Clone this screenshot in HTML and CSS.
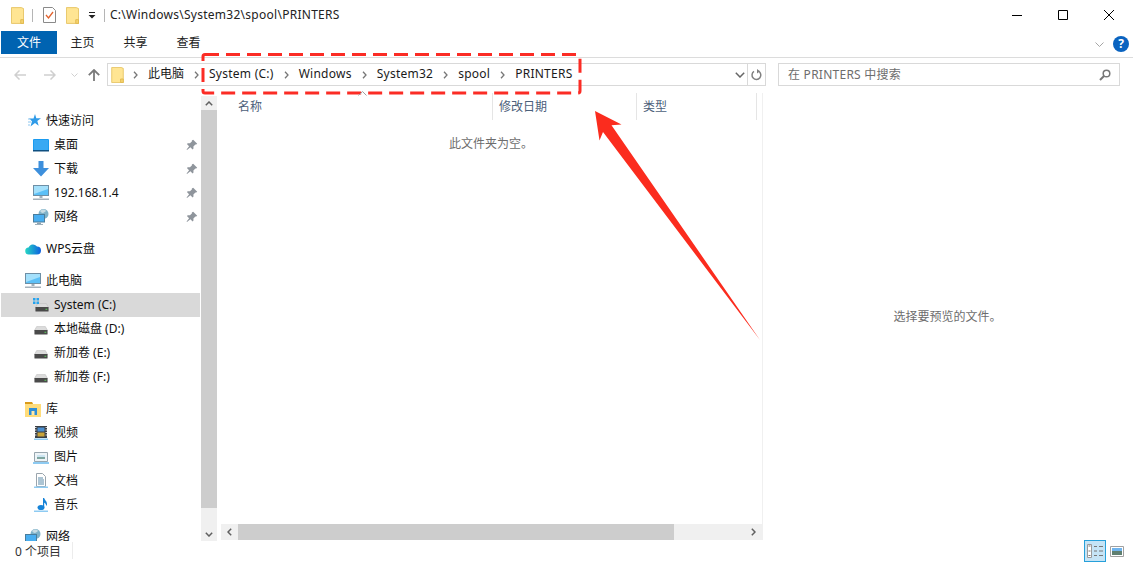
FILE: index.html
```html
<!DOCTYPE html>
<html lang="zh-CN">
<head>
<meta charset="utf-8">
<title>PRINTERS</title>
<link rel="stylesheet" href="styles.css">
</head>
<body>
<svg class="defs" width="0" height="0" aria-hidden="true">
  <symbol id="folder" viewBox="0 0 14 18">
    <path d="M.5.5h10.500l2.500 1v16H.5z" fill="#ffe593" stroke="#e6c463"/>
    <path d="M10.500 13.500h3v4h-3z" fill="#f6d36f" stroke="#e0b94f"/>
  </symbol>
  <symbol id="pin" viewBox="0 0 12 12">
    <path d="M7.200.8l4 4-1 .8-.8-.2-2 2 .1 2.200-.9.900-2.200-2.200L1 11l-.4-.4 2.500-3.300L.9 5.100l.9-.9 2.200.1 2-2-.2-.8z" fill="#8f959c"/>
  </symbol>
  <symbol id="disk" viewBox="0 0 16 10">
    <path d="M3 .5h10l2.500 4.500H.5z" fill="#dcdcdc" stroke="#bbb" stroke-width=".6"/>
    <rect x=".5" y="4.500" width="15" height="5" rx=".6" fill="#4a4a4a"/>
    <rect x="12" y="6.500" width="2" height="1" fill="#5fe05f"/>
  </symbol>
  <symbol id="monitor" viewBox="0 0 16 16">
    <rect x=".5" y=".5" width="15" height="10" fill="#5cc0f7" stroke="#6e8fa5"/>
    <path d="M1 1h14v3L1 9z" fill="#a4e0fb"/>
    <path d="M6.500 11h3v2h-3z" fill="#9fb0bb"/><path d="M0 13.500h16V15H0z" fill="#a5b1ba"/>
  </symbol>
  <symbol id="net" viewBox="0 0 16 16">
    <circle cx="10.500" cy="5" r="5" fill="#7fb2c9"/><path d="M7 2c2-2 5-2 6 0-2 2-4 3-6 0z" fill="#c8dce4"/>
    <rect x=".5" y="5.500" width="11" height="7.500" fill="#49aef0" stroke="#4a7d9c"/>
    <path d="M4 13.500h4V15H4z" fill="#8da2b0"/><path d="M2 15h8v1H2z" fill="#9fb0bb"/>
  </symbol>
</svg>

<div class="window">
  <header class="titlebar">
    <div class="qat">
      <svg class="i-folder" width="13" height="17"><use href="#folder"/></svg>
      <span class="qat-sep"></span>
      <svg class="i-check" width="13" height="16" viewBox="0 0 13 16"><path d="M.5.5h9l3 3v12H.5z" fill="#fff" stroke="#8a8a8a"/><path d="M3 8l2.500 3L10 5" fill="none" stroke="#e2622d" stroke-width="1.300"/></svg>
      <svg class="i-folder" width="13" height="17"><use href="#folder"/></svg>
      <svg class="i-drop" width="8" height="7" viewBox="0 0 8 7"><path d="M1 0h6v1H1zM.5 3h7L4 6.500z" fill="#222"/></svg>
      <span class="qat-sep"></span>
    </div>
    <div class="title">C:\Windows\System32\spool\PRINTERS</div>
    <div class="winctl">
      <svg width="10" height="10" viewBox="0 0 10 10"><path d="M0 5.500h10" stroke="#000"/></svg>
      <svg width="10" height="10" viewBox="0 0 10 10"><path d="M.5.500h9v9h-9z" fill="none" stroke="#000"/></svg>
      <svg width="10" height="10" viewBox="0 0 10 10"><path d="M0 0l10 10M10 0L0 10" stroke="#000"/></svg>
    </div>
  </header>

  <nav class="ribbon">
    <span class="tab tab-file">文件</span>
    <span class="tab">主页</span>
    <span class="tab">共享</span>
    <span class="tab">查看</span>
    <svg class="rib-chev" width="9" height="5" viewBox="0 0 9 5"><path d="M.5.500l4 4 4-4" fill="none" stroke="#a5a5a5"/></svg>
    <span class="help">?</span>
  </nav>

  <div class="addr-row">
    <div class="navbtns">
      <svg width="12" height="10" viewBox="0 0 12 10"><path d="M5.500.5L1 5l4.500 4.500M1 5h11" fill="none" stroke="#cfcfcf" stroke-width="1.500"/></svg>
      <svg width="12" height="10" viewBox="0 0 12 10"><path d="M6.500.5L11 5 6.500 9.500M11 5H0" fill="none" stroke="#cfcfcf" stroke-width="1.500"/></svg>
      <svg width="7" height="4" viewBox="0 0 7 4"><path d="M.5.500l3 3 3-3" fill="none" stroke="#d0d0d0"/></svg>
      <svg width="12" height="12" viewBox="0 0 12 12"><path d="M.8 6.200L6 1l5.200 5.200M6 1v11" fill="none" stroke="#7a7a7a" stroke-width="1.800"/></svg>
    </div>
    <div class="addr">
      <svg class="addr-folder" width="13" height="16"><use href="#folder"/></svg>
      <svg class="chev first" width="5" height="8" viewBox="0 0 5 8"><path d="M1 .8L4 4 1 7.200" fill="none" stroke="#777" stroke-width="1.300"/></svg>
      <div class="crumbs">
        <span>此电脑</span>
        <svg class="chev" width="5" height="8" viewBox="0 0 5 8"><path d="M1 .8L4 4 1 7.200" fill="none" stroke="#777" stroke-width="1.300"/></svg>
        <span class="lat">System (C:)</span>
        <svg class="chev" width="5" height="8" viewBox="0 0 5 8"><path d="M1 .8L4 4 1 7.200" fill="none" stroke="#777" stroke-width="1.300"/></svg>
        <span class="lat">Windows</span>
        <svg class="chev" width="5" height="8" viewBox="0 0 5 8"><path d="M1 .8L4 4 1 7.200" fill="none" stroke="#777" stroke-width="1.300"/></svg>
        <span class="lat">System32</span>
        <svg class="chev" width="5" height="8" viewBox="0 0 5 8"><path d="M1 .8L4 4 1 7.200" fill="none" stroke="#777" stroke-width="1.300"/></svg>
        <span class="lat">spool</span>
        <svg class="chev" width="5" height="8" viewBox="0 0 5 8"><path d="M1 .8L4 4 1 7.200" fill="none" stroke="#777" stroke-width="1.300"/></svg>
        <span class="lat">PRINTERS</span>
      </div>
      <svg class="addr-drop" width="10" height="6" viewBox="0 0 10 6"><path d="M.8.800L5 5 9.200.800" fill="none" stroke="#666" stroke-width="1.500"/></svg>
      <div class="refresh">
        <svg width="11" height="12" viewBox="0 0 11 12"><path d="M7.500 2.200A4.400 4.400 0 1 1 3 2.400" fill="none" stroke="#808080" stroke-width="1.500"/><path d="M6 0v4.500l3-2.200z" fill="#808080"/></svg>
      </div>
    </div>
    <div class="search">
      <span class="lat">在 PRINTERS 中搜索</span>
      <svg width="12" height="12" viewBox="0 0 12 12"><circle cx="7.500" cy="4.500" r="3.300" fill="none" stroke="#777" stroke-width="1.500"/><path d="M5 7L1 11" stroke="#777" stroke-width="2"/></svg>
    </div>
  </div>

  <main class="main">
    <aside class="sidebar">
      <div class="group">
        <div class="row top">
          <svg width="16" height="16" viewBox="0 0 16 16"><path d="M10 1l1.300 4.200H16l-3.700 2.800 1.400 4.800L10 10l-4.500 3.500L7 8.300 4 5.500h4.500z" fill="#2f9be8"/><path d="M3 6h3M3 9h3M3 12h2" stroke="#8cc6ef"/></svg>
          <span>快速访问</span>
        </div>
        <div class="row child">
          <svg width="16" height="13" viewBox="0 0 16 13"><rect width="16" height="12" rx="1" fill="#1a9bf0"/><rect x="1" y="1" width="14" height="10" fill="#39a9f3"/><path d="M0 11h16v1.500H0z" fill="#0f4f80"/></svg>
          <span>桌面</span><svg class="pin" width="12" height="12"><use href="#pin"/></svg>
        </div>
        <div class="row child">
          <svg width="16" height="16" viewBox="0 0 16 16"><path d="M5.500 0h5v7H16l-8 8.500L0 7h5.500z" fill="#3d8fdc"/></svg>
          <span>下载</span><svg class="pin" width="12" height="12"><use href="#pin"/></svg>
        </div>
        <div class="row child">
          <svg width="16" height="16"><use href="#monitor"/></svg>
          <span>192.168.1.4</span><svg class="pin" width="12" height="12"><use href="#pin"/></svg>
        </div>
        <div class="row child">
          <svg width="16" height="16"><use href="#net"/></svg>
          <span>网络</span><svg class="pin" width="12" height="12"><use href="#pin"/></svg>
        </div>
      </div>
      <div class="group">
        <div class="row top">
          <svg width="16" height="12" viewBox="0 0 16 12"><defs><linearGradient id="cloud" x1="0" y1="0" x2="1" y2="0"><stop offset="0" stop-color="#26d7c4"/><stop offset="1" stop-color="#0e5fe0"/></linearGradient></defs><path d="M4 11.500a3.500 3.500 0 0 1-.5-7A5 5 0 0 1 12 3.500a4 4 0 0 1 0 8z" fill="url(#cloud)"/></svg>
          <span>WPS云盘</span>
        </div>
      </div>
      <div class="group">
        <div class="row top">
          <svg width="16" height="16"><use href="#monitor"/></svg>
          <span>此电脑</span>
        </div>
        <div class="row child selected">
          <span class="sys-icon">
            <svg width="14" height="9"><use href="#disk"/></svg>
            <svg class="winlogo" width="6" height="6" viewBox="0 0 6 6"><path d="M0 0h2.500v2.500H0zM3.500 0H6v2.500H3.500zM0 3.500h2.500V6H0zM3.500 3.500H6V6H3.500z" fill="#25a3ee"/></svg>
          </span>
          <span>System (C:)</span>
        </div>
        <div class="row child"><svg class="disk" width="14" height="9"><use href="#disk"/></svg><span>本地磁盘 (D:)</span></div>
        <div class="row child"><svg class="disk" width="14" height="9"><use href="#disk"/></svg><span>新加卷 (E:)</span></div>
        <div class="row child"><svg class="disk" width="14" height="9"><use href="#disk"/></svg><span>新加卷 (F:)</span></div>
      </div>
      <div class="group">
        <div class="row top">
          <svg width="16" height="15" viewBox="0 0 16 15"><path d="M0 0h7l1 2h8v13H0z" fill="#ffdc7a"/><path d="M0 0h7l1 2H0z" fill="#d99a1a"/><path d="M4 6h8v7H4z" fill="#2f8fd8"/><path d="M6.500 9h3v4h-3z" fill="#ffe9a8"/></svg>
          <span>库</span>
        </div>
        <div class="row child">
          <svg width="16" height="16" viewBox="0 0 16 16"><path d="M2 1h12v12H2z" fill="#3a3f44"/><path d="M4.500 2.500h7v4h-7z" fill="#4a8ed0"/><path d="M4.500 7.500h7v4h-7z" fill="#c9a43a"/><path d="M2 2.500h1.500M2 5h1.500M2 7.500h1.500M2 10h1.500M12.500 2.500H14M12.500 5H14M12.500 7.500H14M12.500 10H14" stroke="#ddd"/><path d="M1 13.500h14V15H1z" fill="#8ecbf2"/></svg>
          <span>视频</span>
        </div>
        <div class="row child">
          <svg width="16" height="16" viewBox="0 0 16 16"><path d="M1.500 3.500h13v9h-13z" fill="#eef4f7" stroke="#98a6af"/><path d="M4 6h8v4H4z" fill="#7fa6a0"/><path d="M4 6h8v2H4z" fill="#cde5f2"/><path d="M0 13h16v2H0z" fill="#8ecbf2"/></svg>
          <span>图片</span>
        </div>
        <div class="row child">
          <svg width="16" height="16" viewBox="0 0 16 16"><path d="M3.500.5h6l3 3v10h-9z" fill="#fff" stroke="#9aa5ad"/><path d="M5 5h5M5 7h6M5 9h6M5 11h6" stroke="#5a8aa8"/><path d="M1 13.500h14V15H1z" fill="#8ecbf2"/></svg>
          <span>文档</span>
        </div>
        <div class="row child">
          <svg width="16" height="16" viewBox="0 0 16 16"><ellipse cx="8" cy="10.500" rx="3.500" ry="2.500" fill="#1683d8"/><path d="M10 1h1.200c.3 2 2.800 3 2.800 6 0 1-.3 1.500-.8 2 .1-2-1.400-3-2-3.300V10.500H10z" fill="#1683d8"/><path d="M1 13.500h14V15H1z" fill="#8ecbf2"/></svg>
          <span>音乐</span>
        </div>
      </div>
      <div class="group">
        <div class="row top">
          <svg width="16" height="16"><use href="#net"/></svg>
          <span>网络</span>
        </div>
      </div>
    </aside>

    <div class="vscroll">
      <div class="sb-btn"><svg width="8" height="5" viewBox="0 0 8 5"><path d="M.8 4.200L4 1l3.200 3.200" fill="none" stroke="#606060" stroke-width="1.500"/></svg></div>
      <div class="vthumb"></div>
      <div class="sb-space"></div>
      <div class="sb-btn"><svg width="8" height="5" viewBox="0 0 8 5"><path d="M.8.800L4 4 7.200.800" fill="none" stroke="#606060" stroke-width="1.500"/></svg></div>
    </div>

    <section class="list">
      <div class="cols">
        <span class="col col-name">名称</span>
        <span class="col col-date">修改日期</span>
        <span class="col col-type">类型</span>
      </div>
      <p class="empty">此文件夹为空。</p>
      <div class="hscroll">
        <div class="hbtn"><svg width="5" height="8" viewBox="0 0 5 8"><path d="M4.200.8L1 4l3.200 3.200" fill="none" stroke="#606060" stroke-width="1.500"/></svg></div>
        <div class="hthumb"></div>
        <div class="sb-space"></div>
        <div class="hbtn"><svg width="5" height="8" viewBox="0 0 5 8"><path d="M.8.800L4 4 .8 7.200" fill="none" stroke="#606060" stroke-width="1.500"/></svg></div>
      </div>
    </section>

    <section class="preview">选择要预览的文件。</section>
  </main>

  <footer class="status">
    <span class="count">0 个项目</span>
    <span class="status-sep"></span>
    <div class="views">
      <span class="view on">
        <svg width="16" height="14" viewBox="0 0 16 14"><path d="M.5.500h4v13h-4z" fill="#fff" stroke="#9a9a9a"/><path d="M1.500 2h2M1.500 7h2M1.500 11.500h2M7 2.500h3M12 2.500h4M7 7h3M12 7h4M7 11.500h3M12 11.500h4" stroke="#777"/></svg>
      </span>
      <span class="view">
        <svg width="14" height="11" viewBox="0 0 14 11"><path d="M.5.500h13v10H.5z" fill="#fff" stroke="#a0a0a0"/><path d="M2 2h10v3H2z" fill="#6fb4ee"/><path d="M2 5h10v4H2z" fill="#5f7f70"/></svg>
      </span>
    </div>
  </footer>

  <svg class="annot" width="1133" height="564" viewBox="0 0 1133 564">
    <rect x="203" y="54.500" width="377" height="38.500" rx="2" fill="none" stroke="#fb2c25" stroke-width="3" stroke-dasharray="14 7"/>
    <path d="M595 111l26.500 13.500-10 .7L760 340 603 132l-3.500 8.500z" fill="#fb2c1e"/>
  </svg>
  <svg class="sort" width="9" height="5" viewBox="0 0 9 5"><path d="M.5 4.500l4-4 4 4" fill="none" stroke="#a0a0a0"/></svg>
</div>
</body>
</html>
```

FILE: styles.css
```css
* { box-sizing: border-box; }
html, body { margin: 0; height: 100%; background: #fff; overflow: hidden; }
body { font: 12px/16px "Noto Sans", "Noto Sans CJK SC", sans-serif; color: #1a1a1a; }
svg { display: block; flex: none; }
.defs { position: absolute; }
.lat { letter-spacing: .25px; }

.window { position: relative; width: 1133px; height: 564px; display: flex; flex-direction: column; overflow: hidden; }

.titlebar { height: 30px; display: flex; align-items: center; padding-left: 11px; flex: none; }
.qat { display: flex; align-items: center; }
.i-check { margin-left: 10px; }
.qat-sep { width: 1px; height: 13px; background: #b5b5b5; margin-left: 8px; }
.i-check + .i-folder { margin-left: 10px; }
.i-drop { margin-left: 9px; }
.title { margin-left: 5px; color: #222; letter-spacing: .27px; }
.winctl { margin-left: auto; display: flex; gap: 36px; padding-right: 19px; }

.ribbon { height: 28px; display: flex; align-items: flex-start; padding: 1px 4px 0 1px; border-bottom: 1px solid #dcdcdc; flex: none; }
.tab { width: 53px; height: 23px; display: flex; align-items: center; justify-content: center; color: #222; }
.tab-file { width: 56px; background: #0063b1; color: #fff; }
.tab-file + .tab { margin-left: -1px; }
.rib-chev { margin: 11px 0 0 auto; }
.help { width: 16px; height: 16px; margin: 5px 0 0 9px; border-radius: 50%; background: #0a63c0; color: #fff; font-weight: 700; font-size: 12px; line-height: 16px; text-align: center; }

.addr-row { height: 35px; display: flex; align-items: flex-start; padding: 5px 13px 0 14px; flex: none; }
.navbtns { width: 93px; height: 23px; display: flex; align-items: center; }
.navbtns svg:nth-child(2) { margin-left: 18px; }
.navbtns svg:nth-child(3) { margin-left: 15px; }
.navbtns svg:nth-child(4) { margin-left: 10px; }
.addr { width: 659px; height: 23px; border: 1px solid #d9d9d9; display: flex; align-items: center; padding-left: 3px; }
.chev.first { margin-left: 9px; }
.crumbs { display: flex; align-items: center; gap: 10px; margin-left: 10px; }
.crumbs span { margin-bottom: 2px; }
.addr-drop { margin-left: auto; margin-right: 2px; }
.refresh { width: 18px; height: 21px; border-left: 1px solid #d9d9d9; display: flex; align-items: center; justify-content: center; }
.search { width: 342px; height: 23px; margin-left: 12px; border: 1px solid #d9d9d9; display: flex; align-items: center; justify-content: space-between; padding: 0 8px 0 9px; color: #6d6d6d; }

.main { height: 448px; display: flex; flex: none; overflow: hidden; }
.sidebar { width: 201px; height: 448px; padding-top: 16px; overflow: hidden; flex: none; }
.group { margin-bottom: 8px; }
.row { height: 24px; display: flex; align-items: center; position: relative; color: #111; }
.row.top { padding-left: 25px; gap: 5px; }
.row.child { gap: 5px; margin: 0 1px; width: 199px; padding-left: 32px; }
.row .disk { margin: 3px 1px 0 1px; }
.selected { background: #d9d9d9; }
.sys-icon { width: 16px; height: 16px; position: relative; display: block; }
.sys-icon svg:first-child { position: absolute; left: 2px; top: 6px; }
.sys-icon .winlogo { position: absolute; left: 0; top: 1px; }
.pin { position: absolute; left: 185px; top: 6px; }

.vscroll { width: 16px; height: 445px; margin-top: 3px; display: flex; flex-direction: column; background: #f0f0f0; flex: none; }
.sb-btn { height: 14px; display: flex; align-items: center; justify-content: center; flex: none; }
.vthumb { height: 398px; background: #cdcdcd; flex: none; }
.sb-space { flex: 1; }

.list { width: 542px; margin-left: 4px; display: flex; flex-direction: column; height: 447px; border-right: 1px solid #f0f0f0; flex: none; }
.cols { height: 27px; display: flex; flex: none; color: #4c607a; }
.col { display: flex; align-items: center; padding-left: 6px; border-right: 1px solid #e5e5e5; }
.col-name { width: 272px; padding-left: 17px; }
.col-date { width: 144px; }
.col-type { width: 120px; }
.empty { margin: 16px 0 0; text-align: center; width: 540px; color: #6d6d6d; flex: none; }
.hscroll { margin-top: auto; height: 16px; display: flex; background: #f0f0f0; flex: none; }
.hbtn { width: 17px; display: flex; align-items: center; justify-content: center; flex: none; }
.hthumb { width: 436px; background: #cdcdcd; flex: none; }

.preview { flex: 1; display: flex; align-items: center; justify-content: center; color: #6d6d6d; padding: 0 1px 0 0; height: 447px; }

.status { flex: 1; display: flex; align-items: flex-start; padding: 1px 0 0 15px; color: #333; position: relative; }
.count { margin-top: 2px; }
.status-sep { width: 1px; height: 17px; background: #ececec; margin-left: 11px; }
.views { margin-left: auto; display: flex; align-items: center; padding-right: 9px; gap: 4px; margin-top: -2px; }
.view { width: 22px; height: 22px; display: flex; align-items: center; justify-content: center; }
.view + .view { width: 14px; }
.view.on { background: #c5e4f6; border: 1px solid #26a0da; }

.annot { position: absolute; left: 0; top: 0; pointer-events: none; }
.sort { position: absolute; left: 358px; top: 91px; }
```
